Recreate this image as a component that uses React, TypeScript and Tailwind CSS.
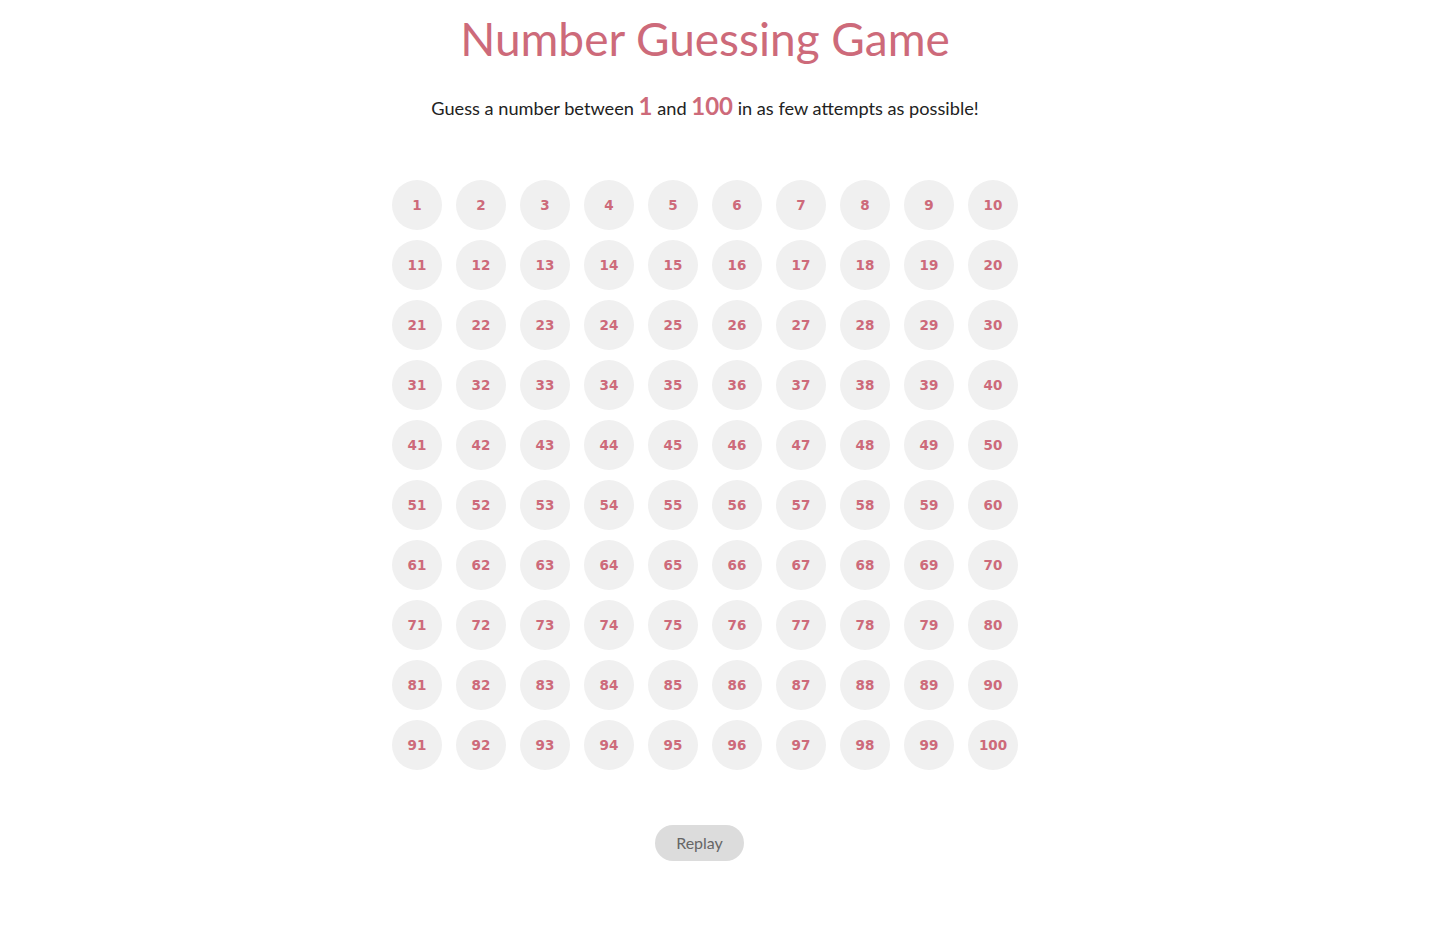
import React from "react";

export default function App() {
  const nums = Array.from({ length: 100 }, (_, i) => i + 1);
  return (
    <div className="w-[1410px] bg-white min-h-[928px] flex flex-col items-center" style={{ fontFamily: "Lato, 'Open Sans', sans-serif" }}>
      <h1 className="mt-[11px] text-[46px] leading-[56px] text-[#cd6a7a] font-normal">Number Guessing Game</h1>
      <p className="mt-[27px] text-[18.2px] leading-[24px] text-[#222]">
        Guess a number between <span className="text-[24px] font-bold text-[#cd6a7a]">1</span> and{" "}
        <span className="text-[24px] font-bold text-[#cd6a7a]">100</span> in as few attempts as possible!
      </p>
      <div className="mt-[60px] grid grid-cols-10 gap-x-[14px] gap-y-[10px]">
        {nums.map((n) => (
          <button
            key={n}
            className="w-[50px] h-[50px] rounded-full bg-[#f0f0f0] text-[#cd6a7a] text-[13.5px] font-bold flex items-center justify-center"
            style={{ fontFamily: "'DejaVu Sans', Verdana, sans-serif" }}
          >
            {n}
          </button>
        ))}
      </div>
      <button className="mt-[55px] mr-[11px] w-[89px] h-[36px] rounded-full bg-[#dcdcdc] text-[#666] text-[16px]">Replay</button>
    </div>
  );
}
